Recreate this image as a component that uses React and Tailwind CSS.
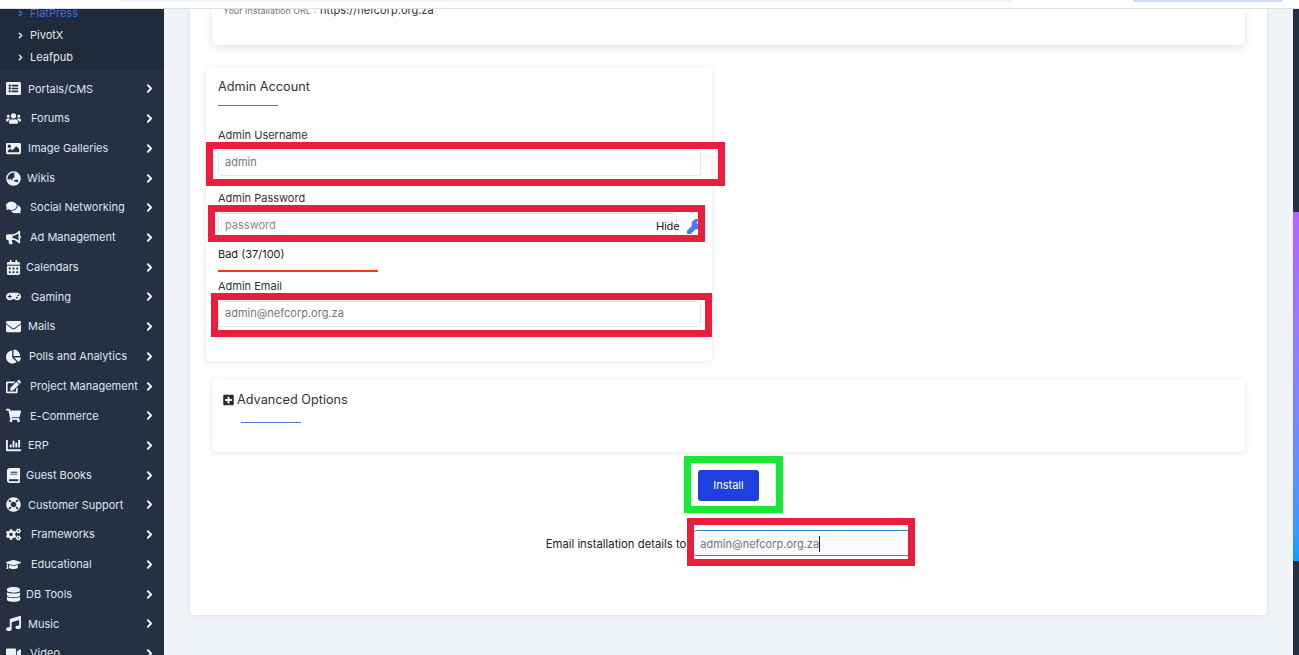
import React from 'react';
import { ChevronRight } from 'lucide-react';
import {
  FaListAlt, FaUsers, FaImage, FaGlobeAsia, FaComments, FaBullhorn, FaCalendarAlt, FaGamepad,
  FaEnvelope, FaChartPie, FaEdit, FaShoppingCart, FaChartBar, FaBook, FaLifeRing, FaCogs,
  FaGraduationCap, FaDatabase, FaMusic, FaVideo, FaPlusSquare, FaKey,
} from 'react-icons/fa';

const menu = [
  { label: 'Portals/CMS', Icon: FaListAlt, slot: 'w-[16px]' },
  { label: 'Forums', Icon: FaUsers, slot: 'w-[19px]' },
  { label: 'Image Galleries', Icon: FaImage, slot: 'w-[16px]' },
  { label: 'Wikis', Icon: FaGlobeAsia, slot: 'w-[15px]' },
  { label: 'Social Networking', Icon: FaComments, slot: 'w-[18px]' },
  { label: 'Ad Management', Icon: FaBullhorn, slot: 'w-[18px]' },
  { label: 'Calendars', Icon: FaCalendarAlt, slot: 'w-[14px]' },
  { label: 'Gaming', Icon: FaGamepad, slot: 'w-[19px]' },
  { label: 'Mails', Icon: FaEnvelope, slot: 'w-[16px]' },
  { label: 'Polls and Analytics', Icon: FaChartPie, slot: 'w-[17px]' },
  { label: 'Project Management', Icon: FaEdit, slot: 'w-[18px]' },
  { label: 'E-Commerce', Icon: FaShoppingCart, slot: 'w-[18px]' },
  { label: 'ERP', Icon: FaChartBar, slot: 'w-[16px]' },
  { label: 'Guest Books', Icon: FaBook, slot: 'w-[14px]' },
  { label: 'Customer Support', Icon: FaLifeRing, slot: 'w-[16px]' },
  { label: 'Frameworks', Icon: FaCogs, slot: 'w-[19px]' },
  { label: 'Educational', Icon: FaGraduationCap, slot: 'w-[19px]' },
  { label: 'DB Tools', Icon: FaDatabase, slot: 'w-[14px]' },
  { label: 'Music', Icon: FaMusic, slot: 'w-[16px]' },
  { label: 'Video', Icon: FaVideo, slot: 'w-[18px]' },
];

const subItems = [
  { label: 'FlatPress', active: true },
  { label: 'PivotX' },
  { label: 'Leafpub' },
];

function Sidebar() {
  return (
    <aside className="w-[164px] shrink-0 h-full overflow-hidden bg-[#253143]">
      <div className="bg-[#1f2a3b] h-[68px] -mt-[7px]">
        {subItems.map((s) => (
          <div key={s.label} className={`h-[22px] flex items-center pl-[16px] text-[11px] ${s.active ? 'text-[#3f6ee0]' : 'text-[#e5e9ef]'}`}>
            <ChevronRight size={9} strokeWidth={4} />
            <span className="ml-[5px]">{s.label}</span>
          </div>
        ))}
      </div>
      <ul className="pt-[4px]">
        {menu.map(({ label, Icon, slot }) => (
          <li key={label} className="h-[29.72px] pl-[6px] pr-[8px] flex items-center text-[11px] text-[#dfe4ea]">
            <span className={`${slot} shrink-0 text-[#eef1f5]`}><Icon className="h-[15px] w-auto" /></span>
            <span className="ml-[6px] whitespace-nowrap">{label}</span>
            <ChevronRight size={13} strokeWidth={3.5} className="ml-auto shrink-0 text-[#eef1f5]" />
          </li>
        ))}
      </ul>
    </aside>
  );
}

function FieldLabel({ children, className = '' }) {
  return <label className={`block text-[11px] leading-[17px] text-[#333] ${className}`}>{children}</label>;
}

function TextBox({ value }) {
  return (
    <div className="w-[483px] h-[26px] mt-[6px] pb-[1px] border border-[#e4e7ea] rounded-[3px] bg-white pl-[6px] flex items-center text-[11px] text-[#777]">
      {value}
    </div>
  );
}

export default function App() {
  return (
    <div className="relative w-[1299px] h-[655px] overflow-hidden flex flex-col bg-[#f0f4f9] font-['Inter','Liberation_Sans',sans-serif]">
      {/* browser strip */}
      <div className="h-[9px] shrink-0 bg-white border-b border-[#dfe2e5] relative z-10 flex">
        <div className="ml-[120px] w-[893px] h-[2px] rounded-b-full bg-[#eef2fb]" />
        <div className="ml-[120px] w-[150px] h-[2px] rounded-b-full bg-[#cfdcfb]" />
      </div>

      <div className="flex flex-1 min-h-0">
        <Sidebar />

        <main className="flex-1 min-w-0 pl-[26px] pr-[26px]">
          <div className="w-[1077px] h-[606px] bg-white rounded-b-[4px] shadow-[0_1px_6px_rgba(0,0,0,0.08)] pl-[16px] pr-[16px]">
            {/* install url card */}
            <div className="w-[1033px] ml-[6px] h-[36px] bg-white rounded-b-[5px] shadow-[0_2px_8px_rgba(0,0,0,0.12)] pl-[11px] overflow-hidden">
              <div className="-mt-[7px] flex items-center gap-[4px] whitespace-nowrap">
                <span className="text-[9px] text-[#777]">Your Installation URL :</span>
                <span className="text-[11px] text-[#333]">https://nefcorp.org.za</span>
              </div>
            </div>

            {/* admin account */}
            <div className="w-[506px] h-[294px] mt-[22px] rounded-[5px] bg-white shadow-[0_1px_6px_rgba(0,0,0,0.1)] px-[12px] pt-[11px]">
              <h3 className="text-[12.7px] leading-[18px] text-[#333]">Admin Account</h3>
              <div className="w-[60px] h-px bg-[#4a7bd8] mt-[9px]" />

              <FieldLabel className="mt-[21px]">Admin Username</FieldLabel>
              <TextBox value="admin" />

              <FieldLabel className="mt-[14px]">Admin Password</FieldLabel>
              <div className="relative w-[459px] h-[26px] mt-[6px] pb-[1px] border border-[#e4e7ea] rounded-[3px] bg-white pl-[6px] flex items-center text-[11px] text-[#888]">
                password
                <span className="absolute left-[437px] top-[4px] text-[11.5px] text-[#222] font-['Liberation_Sans',sans-serif]">Hide</span>
                <FaKey className="absolute left-[468px] top-[5px] w-[15px] h-[15px] text-[#4a7cf0]" />
              </div>

              <p className="text-[11px] leading-[17px] text-[#222] mt-[7px]">Bad (37/100)</p>
              <div className="w-[160px] h-[2px] bg-[#f03a0c] mt-[7px]" />

              <FieldLabel className="mt-[6px]">Admin Email</FieldLabel>
              <TextBox value="admin@nefcorp.org.za" />
            </div>

            {/* advanced options */}
            <div className="w-[1033px] ml-[6px] h-[73px] mt-[18px] rounded-[5px] bg-white shadow-[0_1px_6px_rgba(0,0,0,0.1)] pl-[11px] pt-[11px]">
              <div className="flex items-center gap-[3px] text-[12.7px] leading-[20px] text-[#333]">
                <FaPlusSquare className="w-[11px] h-[12px] text-[#2b2b2b]" />
                Advanced Options
              </div>
              <div className="w-[60px] h-px bg-[#4a7bd8] ml-[18px] mt-[12px]" />
            </div>

            {/* install */}
            <div className="flex justify-center mt-[18px]">
              <button className="w-[61px] h-[31px] rounded-[3px] bg-[#1f40e0] text-white text-[11px]">Install</button>
            </div>
            <div className="flex items-center justify-center mt-[29px] text-[11px] text-[#222]">
              <span className="whitespace-nowrap pt-[2px] text-[11.3px]">Email installation details to</span>
              <div className="w-[218px] h-[26px] ml-[7px] pt-[2px] border border-[#2d8fdc] rounded-[3px] bg-[#f8fafd] pl-[6px] flex items-center text-[#777]">
                admin@nefcorp.org.za<span className="w-px h-[16px] bg-[#222]" />
              </div>
            </div>
          </div>
        </main>
      </div>

      {/* annotation boxes drawn over the screenshot */}
      <div className="absolute left-[206px] top-[142px] w-[519px] h-[44px] border-[7px] border-[#ec1c3d]" />
      <div className="absolute left-[208px] top-[205px] w-[497px] h-[37px] border-[7px] border-[#ec1c3d]" />
      <div className="absolute left-[211px] top-[293px] w-[501px] h-[44px] border-[7px] border-[#ec1c3d]" />
      <div className="absolute left-[687px] top-[518px] w-[228px] h-[48px] border-[7px] border-[#ec1c3d]" />
      <div className="absolute left-[684px] top-[456px] w-[99px] h-[57px] border-[7px] border-[#18ea33]" />

      {/* scrollbar */}
      <div className="absolute right-0 top-[9px] bottom-0 w-[6px] bg-[#253143]">
        <div className="mt-[203px] h-[349px] bg-gradient-to-b from-[#b265ff] to-[#0a9cff]" />
      </div>
    </div>
  );
}
